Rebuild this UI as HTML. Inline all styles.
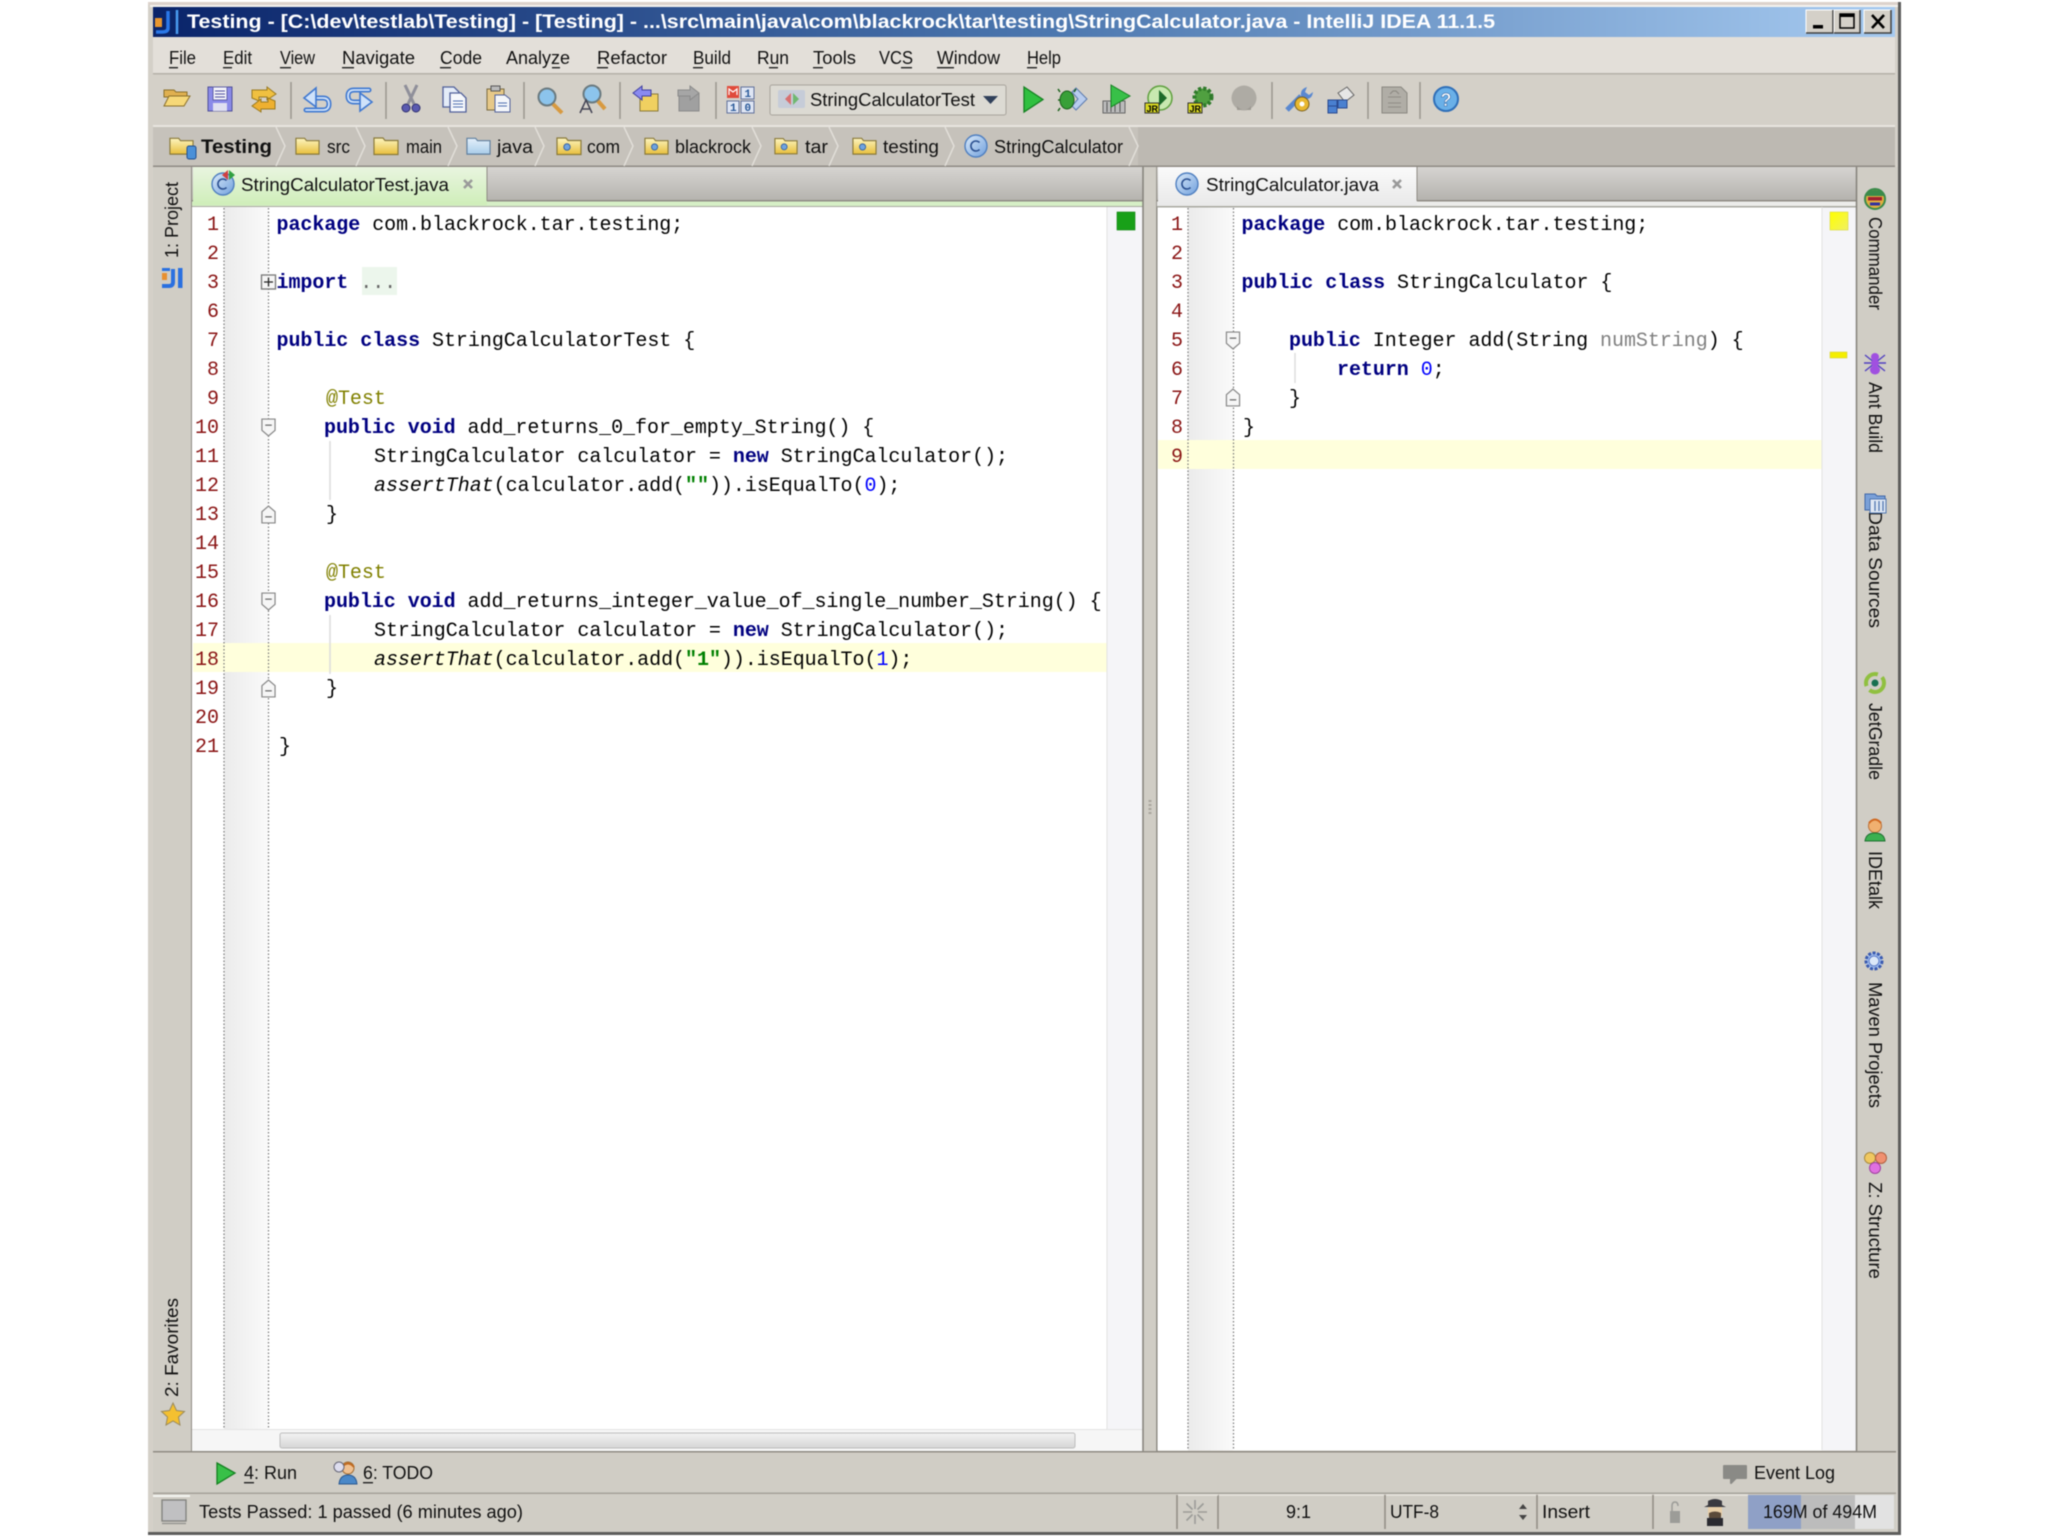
<!DOCTYPE html>
<html><head><meta charset="utf-8"><title>IntelliJ IDEA</title>
<style>
html,body{margin:0;padding:0;background:#fff;width:2048px;height:1536px;overflow:hidden}
svg{display:block;filter:blur(.45px)}
text{white-space:pre}
.u{font-family:"Liberation Sans",sans-serif;font-size:18px;fill:#111}
.m{font-family:"Liberation Mono",monospace;font-size:20px;fill:#000;letter-spacing:-.04px}
.k{font-weight:bold;fill:#000080}
.a{fill:#808000}.s{font-weight:bold;fill:#008000}.n{fill:#0000ff}.p{fill:#808080}.i{font-style:italic}
.ln{font-family:"Liberation Mono",monospace;font-size:20px;fill:#8a1414;text-anchor:end}
.dot{stroke:#777;stroke-width:1.2;stroke-dasharray:1.5 2;fill:none}
.sep{stroke:#9a978f;stroke-width:1.5}
.ch{fill:none;stroke:#e2dfd9;stroke-width:1.5}
.d{font-family:"Liberation Mono",monospace;font-size:11px;font-weight:bold;fill:#2a5a9a}
</style></head><body>
<svg width="2048" height="1536" viewBox="0 0 2048 1536" xmlns="http://www.w3.org/2000/svg">
<defs>
<linearGradient id="tg" x1="0" x2="1" y1="0" y2="0"><stop offset="0" stop-color="#0a246a"/><stop offset=".5" stop-color="#4a75ad"/><stop offset="1" stop-color="#a6caf0"/></linearGradient>
<linearGradient id="tabbar" x1="0" x2="0" y1="0" y2="1"><stop offset="0" stop-color="#d6d4d1"/><stop offset="1" stop-color="#b5b3ae"/></linearGradient>
<linearGradient id="gt" x1="0" x2="0" y1="0" y2="1"><stop offset="0" stop-color="#e9f5e0"/><stop offset="1" stop-color="#cfeeb9"/></linearGradient>
<linearGradient id="wt" x1="0" x2="0" y1="0" y2="1"><stop offset="0" stop-color="#fafafa"/><stop offset="1" stop-color="#e9e9e9"/></linearGradient>
<linearGradient id="sc" x1="0" x2="0" y1="0" y2="1"><stop offset="0" stop-color="#f2f2f2"/><stop offset="1" stop-color="#d6d6d6"/></linearGradient>
<linearGradient id="fy" x1="0" x2="0" y1="0" y2="1"><stop offset="0" stop-color="#fdf5c0"/><stop offset="1" stop-color="#e8bf3c"/></linearGradient>
<linearGradient id="fb" x1="0" x2="0" y1="0" y2="1"><stop offset="0" stop-color="#e4f0fa"/><stop offset="1" stop-color="#a9cdea"/></linearGradient>
<linearGradient id="cc" x1="0" x2="1" y1="0" y2="1"><stop offset="0" stop-color="#dcebfa"/><stop offset="1" stop-color="#6f9fdc"/></linearGradient>
<linearGradient id="yy" x1="0" x2="1" y1="0" y2="1"><stop offset="0" stop-color="#ffff00"/><stop offset="1" stop-color="#f0f060"/></linearGradient>
<linearGradient id="gut" x1="0" x2="1" y1="0" y2="0"><stop offset="0" stop-color="#ebebeb"/><stop offset="1" stop-color="#fafafa"/></linearGradient>
<symbol id="fold" viewBox="0 0 26 20" overflow="visible"><path d="M1 3h9l2 2.5h13v14H1z" fill="url(#fy)" stroke="#8a7a3a" stroke-width="1.2"/></symbol>
<symbol id="fblue" viewBox="0 0 26 20" overflow="visible"><path d="M1 3h9l2 2.5h13v14H1z" fill="url(#fb)" stroke="#5f7f9f" stroke-width="1.2"/></symbol>
<symbol id="pk" viewBox="0 0 26 20" overflow="visible"><path d="M1 3h9l2 2.5h13v14H1z" fill="url(#fy)" stroke="#8a7a3a" stroke-width="1.2"/><circle cx="11" cy="12" r="3.2" fill="#6fa4e0" stroke="#3a64a0"/></symbol>
<symbol id="cico" viewBox="0 0 24 24" overflow="visible"><circle cx="12" cy="12" r="11" fill="url(#cc)" stroke="#4f7fc0" stroke-width="1.4"/><path d="M15.5 8.5a5 5 0 1 0 0 7" fill="none" stroke="#2a4f8f" stroke-width="1.6"/></symbol>
<symbol id="fdn" viewBox="0 0 16 20" overflow="visible"><path d="M1 1h14v12l-7 6-7-6z" fill="#f6f6f6" stroke="#888" stroke-width="1.3"/><path d="M4.5 7.5h7" stroke="#666" stroke-width="1.3"/></symbol>
<symbol id="fup" viewBox="0 0 16 20" overflow="visible"><path d="M1 19h14V7L8 1 1 7z" fill="#f6f6f6" stroke="#888" stroke-width="1.3"/><path d="M4.5 12.5h7" stroke="#666" stroke-width="1.3"/></symbol>
</defs>

<!-- window -->
<rect width="2048" height="1536" fill="#fff"/>
<rect x="148" y="2" width="1753" height="1533" fill="#d4d0c8"/>
<rect x="148" y="2" width="1753" height="3" fill="#dcd2cc"/>
<rect x="150" y="5" width="1749" height="2" fill="#f4f2ee"/>
<rect x="1898" y="2" width="3" height="1533" fill="#5d5d5b"/>
<rect x="148" y="1532" width="1753" height="3" fill="#5d5d5b"/>
<!-- title -->
<rect x="153" y="7" width="1742" height="30" fill="url(#tg)"/>
<rect x="155" y="18" width="7" height="9" fill="#e8962e"/>
<path d="M168 11v17q0 4-6 4h-6" fill="none" stroke="#2a78e8" stroke-width="3.500"/><path d="M177 10v24" stroke="#4a9cf0" stroke-width="2.500"/>
<text x="187" y="28" textLength="1308" lengthAdjust="spacingAndGlyphs" font-family="Liberation Sans" font-weight="bold" font-size="19" fill="#fff">Testing - [C:\dev\testlab\Testing] - [Testing] - ...\src\main\java\com\blackrock\tar\testing\StringCalculator.java - IntelliJ IDEA 11.1.5</text>
<g>
<rect x="1806" y="10" width="27" height="23" fill="#d4d0c8" stroke="#fff"/><path d="M1833 10v23h-27" fill="none" stroke="#404040" stroke-width="1.5"/><rect x="1813" y="25" width="10" height="3.5" fill="#000"/>
<rect x="1834" y="10" width="26" height="23" fill="#d4d0c8" stroke="#fff"/><path d="M1860 10v23h-26" fill="none" stroke="#404040" stroke-width="1.5"/><rect x="1840" y="14" width="14" height="14" fill="none" stroke="#000" stroke-width="1.5"/><rect x="1840" y="14" width="14" height="3" fill="#000"/>
<rect x="1864" y="10" width="27" height="23" fill="#d4d0c8" stroke="#fff"/><path d="M1891 10v23h-27" fill="none" stroke="#404040" stroke-width="1.5"/><path d="M1872 15l12 13M1884 15l-12 13" stroke="#000" stroke-width="2.6"/>
</g>
<!-- menu -->
<rect x="153" y="37" width="1742" height="36" fill="#e3dfd9"/>
<rect x="153" y="73" width="1742" height="1.5" fill="#b4b0a9"/>
<g class="u">
<text class="u" x="169" y="64" textLength="27" lengthAdjust="spacingAndGlyphs">File</text>
<text class="u" x="223" y="64" textLength="29" lengthAdjust="spacingAndGlyphs">Edit</text>
<text class="u" x="280" y="64" textLength="35" lengthAdjust="spacingAndGlyphs">View</text>
<text class="u" x="342" y="64" textLength="73" lengthAdjust="spacingAndGlyphs">Navigate</text>
<text class="u" x="440" y="64" textLength="42" lengthAdjust="spacingAndGlyphs">Code</text>
<text class="u" x="506" y="64" textLength="64" lengthAdjust="spacingAndGlyphs">Analyze</text>
<text class="u" x="597" y="64" textLength="70" lengthAdjust="spacingAndGlyphs">Refactor</text>
<text class="u" x="693" y="64" textLength="38" lengthAdjust="spacingAndGlyphs">Build</text>
<text class="u" x="757" y="64" textLength="32" lengthAdjust="spacingAndGlyphs">Run</text>
<text class="u" x="813" y="64" textLength="43" lengthAdjust="spacingAndGlyphs">Tools</text>
<text class="u" x="879" y="64" textLength="34" lengthAdjust="spacingAndGlyphs">VCS</text>
<text class="u" x="937" y="64" textLength="63" lengthAdjust="spacingAndGlyphs">Window</text>
<text class="u" x="1027" y="64" textLength="34" lengthAdjust="spacingAndGlyphs">Help</text>
</g>
<g fill="#222">
<rect x="169" y="67" width="9" height="1.4"/><rect x="223" y="67" width="9" height="1.4"/><rect x="280" y="67" width="11" height="1.4"/><rect x="342" y="67" width="12" height="1.4"/><rect x="440" y="67" width="11" height="1.4"/><rect x="552" y="67" width="8" height="1.4"/><rect x="597" y="67" width="11" height="1.4"/><rect x="693" y="67" width="10" height="1.4"/><rect x="769" y="67" width="9" height="1.4"/><rect x="813" y="67" width="10" height="1.4"/><rect x="901" y="67" width="11" height="1.4"/><rect x="937" y="67" width="17" height="1.4"/><rect x="1027" y="67" width="10" height="1.4"/>
</g>
<!-- toolbar -->
<rect x="153" y="74.5" width="1742" height="51" fill="#d4d0c8"/>
<rect x="153" y="125" width="1742" height="2" fill="#e8e5df"/>
<g class="sep"><path d="M291 82v37M386 82v37M524 82v37M620 82v37M716 82v37M1272 82v37M1368 82v37M1420 82v37"/></g>
<!-- open -->
<path d="M164 90h10l2 2h11v5h-23z" fill="#e0b050" stroke="#8a6f2a"/><path d="M164 106l5-10h21l-6 10z" fill="#f6d878" stroke="#8a6f2a"/>
<!-- save -->
<rect x="208" y="87" width="24" height="24" fill="#8a8ae8" stroke="#50509a"/><rect x="213" y="87" width="14" height="13" fill="#f4f4fa" stroke="#6060a8"/><rect x="213" y="103" width="14" height="8" fill="#e0e0f0"/><path d="M215 91h10M215 94h10M215 97h10" stroke="#5050a0"/>
<!-- sync -->
<path d="M252 98v-8h15v-3l9 7-9 6v-3h-8v4z" fill="#f0c040" stroke="#9a7a20"/><path d="M275 101v8h-14v3l-9-6 9-7v3h7v-4z" fill="#eeb030" stroke="#9a7a20"/>
<!-- undo -->
<g fill="none" stroke-linecap="round">
<path d="M316 98h7q6 0 6 6t-6 6h-17" stroke="#3f78d0" stroke-width="5"/><path d="M316 98h7q6 0 6 6t-6 6h-17" stroke="#cfe2fa" stroke-width="1.800"/>
</g>
<path d="M304 98l12-10v19z" fill="#cfe2fa" stroke="#3f78d0" stroke-width="1.600"/>
<!-- redo -->
<g fill="none" stroke-linecap="round">
<path d="M369 90h-15q-6 0-6 6t6 6h7" stroke="#3f78d0" stroke-width="5"/><path d="M369 90h-15q-6 0-6 6t6 6h7" stroke="#cfe2fa" stroke-width="1.800"/>
</g>
<path d="M372 102l-12-9v18z" fill="#cfe2fa" stroke="#3f78d0" stroke-width="1.600"/>
<!-- cut -->
<path d="M405 85l9 19M417 85l-9 19" stroke="#8f8f9a" stroke-width="3"/><circle cx="406" cy="108" r="4" fill="#5a5ab0" stroke="#303070"/><circle cx="416" cy="108" r="4" fill="#5a5ab0" stroke="#303070"/>
<!-- copy -->
<path d="M443 87h11l5 5v15h-16z" fill="#e4ecf8" stroke="#50609a" stroke-width="1.300"/><path d="M450 93h11l5 5v14h-16z" fill="#f6f8fc" stroke="#50609a" stroke-width="1.300"/><path d="M453 101h10M453 104h10M453 107h10" stroke="#5070b0"/>
<!-- paste -->
<rect x="487" y="89" width="17" height="21" fill="#e6c888" stroke="#7a6a40"/><rect x="491" y="86" width="9" height="5" fill="#bbb" stroke="#555"/><path d="M495 95h10l5 4v13h-15z" fill="#f4f6fa" stroke="#50609a"/><path d="M498 103h9M498 106h9" stroke="#5070b0"/>
<!-- find -->
<circle cx="547" cy="97" r="8.500" fill="#8cc4ec" stroke="#6a7a80" stroke-width="2"/><path d="M553 104l9 9" stroke="#d89a40" stroke-width="4"/>
<!-- replace -->
<circle cx="592" cy="94" r="8.500" fill="#8cc4ec" stroke="#6a7a80" stroke-width="2"/><path d="M598 101l7 8" stroke="#d89a40" stroke-width="4"/><path d="M580 113l6-13 6 13M582 109h8" fill="none" stroke="#445" stroke-width="1.500"/>
<!-- back / fwd -->
<path d="M640 94h18v17h-18z" fill="#f0d060" stroke="#8a7a3a"/><path d="M633 93l9-7v4h9v6h-9v4z" fill="#8a8af0" stroke="#4040a0"/>
<path d="M679 94h20v17h-20z" fill="#a0a0a0" stroke="#8a8a8a"/><path d="M699 93l-9-7v4h-12v6h12v4z" fill="#a6a6a6" stroke="#8a8a8a"/>
<!-- hierarchy -->
<rect x="727" y="86" width="12" height="12" fill="#e04a3a"/><path d="M729 95v-6l4 3 4-3v6" fill="none" stroke="#fff" stroke-width="1.200"/>
<rect x="741" y="87" width="13" height="12" fill="#dfe6f4" stroke="#60709a"/><rect x="727" y="101" width="12" height="12" fill="#dfe6f4" stroke="#60709a"/><rect x="741" y="101" width="13" height="12" fill="#dfe6f4" stroke="#60709a"/>
<text class="d" x="744.500" y="97">1</text><text class="d" x="730" y="111">1</text><text class="d" x="744.500" y="111">0</text>
<!-- combo -->
<rect x="770" y="85" width="236" height="30" rx="2" fill="#dcdad3" stroke="#a8a49c"/>
<rect x="778" y="90" width="27" height="18" rx="2" fill="#c6ccd8"/><path d="M791 93l-6 6 6 6z" fill="#d87070"/><path d="M793 93l6 6-6 6z" fill="#70b870"/>
<text class="u" x="810" y="106" textLength="165" lengthAdjust="spacingAndGlyphs">StringCalculatorTest</text>
<path d="M983 96h15l-7.500 8z" fill="#30405a"/>
<!-- run -->
<path d="M1024 87l19 12.500-19 12.500z" fill="#30c040" stroke="#148020" stroke-width="1.300"/>
<!-- debug -->
<path d="M1076 88l11 11-11 11-4-4 6-7-6-7z" fill="#b8ccee" stroke="#5a7ab0"/><ellipse cx="1067" cy="100" rx="7" ry="9" fill="#38a038" stroke="#1a601a"/><path d="M1060 92l-2-3M1060 108l-2 3M1074 92l2-3M1060 100h-2" stroke="#1a601a" stroke-width="1.500"/>
<!-- coverage -->
<path d="M1103 101h22v12h-22z" fill="#bbb" stroke="#666"/><path d="M1107 102v10M1111 102v10M1115 102v10M1120 102v10" stroke="#555"/><path d="M1111 85l19 11-19 11z" fill="#38c048" stroke="#148020"/>
<!-- jr -->
<circle cx="1160" cy="98" r="12" fill="#c8e8b0" stroke="#60a040" stroke-width="1.500"/><path d="M1159 90l8 8-8 8z" fill="#1c6a28"/><rect x="1145" y="103" width="14" height="10" fill="#d8d820" stroke="#333"/>
<text x="1146.500" y="112" font-family="Liberation Sans" font-weight="bold" font-size="9" fill="#000">JR</text>
<!-- jr bug -->
<circle cx="1203" cy="97" r="8.500" fill="#50a040" stroke="#2e7a2a" stroke-width="4" stroke-dasharray="3 2"/><rect x="1188" y="103" width="14" height="10" fill="#d8d820" stroke="#333"/>
<text x="1189.500" y="112" font-family="Liberation Sans" font-weight="bold" font-size="9" fill="#000">JR</text>
<!-- stop -->
<circle cx="1244" cy="98" r="12.500" fill="#aeaba4"/><path d="M1237 106q7 8 14 0v4h-14z" fill="#9c9992"/>
<!-- settings -->
<path d="M1287 110l14-14" stroke="#5a88d0" stroke-width="5"/><path d="M1301 96q-1-7 6-9l-2 5 4 3 4-3q-1 8-9 7" fill="#5a88d0"/><circle cx="1302" cy="104" r="7" fill="#e8b830" stroke="#7a6020"/><circle cx="1302" cy="104" r="2.500" fill="#fff"/>
<!-- structure -->
<path d="M1338 93l9-6 7 8-9 7z" fill="#e6e6e6" stroke="#666"/><rect x="1328" y="100" width="9" height="8" fill="#4a80d0" stroke="#2a4a90"/><rect x="1338" y="100" width="9" height="8" fill="#4a80d0" stroke="#2a4a90"/><rect x="1328" y="106" width="9" height="7" fill="#4a80d0" stroke="#2a4a90"/>
<!-- doc -->
<path d="M1382 87h19l6 6v20h-25z" fill="#b0ada6" stroke="#8a8780"/><path d="M1388 97h13M1388 103h13M1388 107h13" stroke="#8f8c86"/><path d="M1390 94l3-3h3l3 3" fill="none" stroke="#8a8780"/>
<!-- help -->
<circle cx="1446" cy="99" r="12" fill="#6ab0e8" stroke="#2f6fb8" stroke-width="2"/><text x="1446" y="106" text-anchor="middle" font-family="Liberation Sans" font-weight="bold" font-size="18" fill="#fff" stroke="#2a5a9a" stroke-width=".5">?</text>

<!-- breadcrumb -->
<rect x="153" y="127" width="1742" height="39" fill="#bdb9b2"/>
<rect x="153" y="127" width="985" height="39" fill="#c6c2bb"/>
<rect x="153" y="165.500" width="1742" height="1.500" fill="#8f8b84"/>
<use href="#fold" x="169" y="135" width="25" height="20"/>
<rect x="187" y="146" width="9" height="13" rx="2" fill="#4a90d8" stroke="#204f90"/>
<text class="u" x="201" y="153" textLength="71" lengthAdjust="spacingAndGlyphs" font-weight="bold" style="font-size:19px">Testing</text>
<use href="#fold" x="295" y="135" width="25" height="20"/><text class="u" x="327" y="153" textLength="23" lengthAdjust="spacingAndGlyphs">src</text>
<use href="#fold" x="373" y="135" width="26" height="20"/><text class="u" x="406" y="153" textLength="36" lengthAdjust="spacingAndGlyphs">main</text>
<use href="#fblue" x="466" y="135" width="25" height="20"/><text class="u" x="497" y="153" textLength="36" lengthAdjust="spacingAndGlyphs">java</text>
<use href="#pk" x="556" y="135" width="26" height="20"/><text class="u" x="587" y="153" textLength="33" lengthAdjust="spacingAndGlyphs">com</text>
<use href="#pk" x="644" y="135" width="25" height="20"/><text class="u" x="675" y="153" textLength="76" lengthAdjust="spacingAndGlyphs">blackrock</text>
<use href="#pk" x="774" y="135" width="24" height="20"/><text class="u" x="805" y="153" textLength="23" lengthAdjust="spacingAndGlyphs">tar</text>
<use href="#pk" x="852" y="135" width="25" height="20"/><text class="u" x="883" y="153" textLength="56" lengthAdjust="spacingAndGlyphs">testing</text>
<use href="#cico" x="964" y="134" width="24" height="24"/><text class="u" x="994" y="153" textLength="129" lengthAdjust="spacingAndGlyphs">StringCalculator</text>
<g class="ch"><path d="M276 127l9 19-9 20M356 127l9 19-9 20M448 127l9 19-9 20M535 127l9 19-9 20M624 127l9 19-9 20M752 127l9 19-9 20M829 127l9 19-9 20M945 127l9 19-9 20M1129 127l9 19-9 20"/></g>

<!-- left strip -->
<rect x="153" y="167" width="39" height="1284" fill="#d0cdc5"/>
<rect x="191" y="167" width="1.500" height="1284" fill="#8f8b84"/>
<text class="u" transform="translate(178 258) rotate(-90)" textLength="76" lengthAdjust="spacingAndGlyphs">1: Project</text>
<rect x="162" y="273" width="5" height="7" fill="#e89030"/><path d="M173 269v13q0 4-4 4h-7" fill="none" stroke="#2a70e0" stroke-width="4"/><rect x="162" y="268" width="8" height="3" fill="#2a70e0"/><rect x="178" y="268" width="4.500" height="20" fill="#2a70e0"/>
<text class="u" transform="translate(178 1397) rotate(-90)" textLength="99" lengthAdjust="spacingAndGlyphs">2: Favorites</text>
<path d="M173 1403l3.500 7.500 8 1-6 5.500 1.500 8-7-4-7 4 1.500-8-6-5.500 8-1z" fill="#f4c030" stroke="#9a8a5a"/>

<!-- left tabs -->
<rect x="192" y="167" width="951" height="34" fill="url(#tabbar)"/>
<rect x="192" y="200" width="951" height="1.500" fill="#8f8b84"/>
<rect x="192" y="201.500" width="951" height="5" fill="#d6efc6"/>
<rect x="192" y="206" width="951" height="1.500" fill="#a8a8a0"/>
<rect x="193" y="167" width="294" height="38" fill="url(#gt)"/>
<path d="M487 167v34" stroke="#8f8b84"/>
<use href="#cico" x="211" y="172" width="24" height="24"/><path d="M228 170l-6 5 6 5z" fill="#d04040"/><path d="M229 170l6 5-6 5z" fill="#30a040"/>
<text class="u" x="241" y="191" textLength="208" lengthAdjust="spacingAndGlyphs">StringCalculatorTest.java</text>
<path d="M464 180l8 8M472 180l-8 8" stroke="#9a9a9a" stroke-width="2.600"/>

<!-- left editor -->
<rect x="192" y="207" width="951" height="1244" fill="#fff"/>
<rect x="224" y="207" width="44" height="1222" fill="url(#gut)"/>
<rect x="193" y="643" width="914" height="29" fill="#ffffdc"/>
<path class="dot" d="M224 208V1428M268.500 208V1428"/>
<rect x="1107" y="207" width="36" height="1244" fill="#f5f5f8"/>
<path d="M1107 207v1222" stroke="#e2e2e2"/>
<rect x="1117" y="212" width="18" height="18" fill="#18a018" stroke="#0e800e" stroke-width=".6"/>
<rect x="362" y="267" width="35" height="28" fill="#ecf6ec"/>
<path d="M330 441v59M330 615v59" stroke="#dcdcdc" stroke-width="1.500"/>
<text class="ln" x="219" y="230">1</text><text class="ln" x="219" y="259">2</text><text class="ln" x="219" y="288">3</text><text class="ln" x="219" y="317">6</text><text class="ln" x="219" y="346">7</text><text class="ln" x="219" y="375">8</text><text class="ln" x="219" y="404">9</text><text class="ln" x="219" y="433">10</text><text class="ln" x="219" y="462">11</text><text class="ln" x="219" y="491">12</text><text class="ln" x="219" y="520">13</text><text class="ln" x="219" y="549">14</text><text class="ln" x="219" y="578">15</text><text class="ln" x="219" y="607">16</text><text class="ln" x="219" y="636">17</text><text class="ln" x="219" y="665">18</text><text class="ln" x="219" y="694">19</text><text class="ln" x="219" y="723">20</text><text class="ln" x="219" y="752">21</text>
<rect x="261.500" y="275" width="14" height="14" fill="#f6f6f6" stroke="#777" stroke-width="1.300"/><path d="M264 282h9M268.500 277.500v9" stroke="#222" stroke-width="1.300"/>
<use href="#fdn" x="261" y="418" width="15" height="19"/><use href="#fup" x="261" y="505" width="15" height="19"/>
<use href="#fdn" x="261" y="592" width="15" height="19"/><use href="#fup" x="261" y="679" width="15" height="19"/>
<g>
<text class="m" x="276.500" y="230"><tspan class="k">package</tspan> com.blackrock.tar.testing;</text>
<text class="m" x="276.500" y="288"><tspan class="k">import</tspan> <tspan fill="#666">...</tspan></text>
<text class="m" x="276.500" y="346"><tspan class="k">public class</tspan> StringCalculatorTest {</text>
<text class="m a" x="326" y="404">@Test</text>
<text class="m" x="324" y="433"><tspan class="k">public void</tspan> add_returns_0_for_empty_String() {</text>
<text class="m" x="374" y="462">StringCalculator calculator = <tspan class="k">new</tspan> StringCalculator();</text>
<text class="m" x="374" y="491"><tspan class="i">assertThat</tspan>(calculator.add(<tspan class="s">""</tspan>)).isEqualTo(<tspan class="n">0</tspan>);</text>
<text class="m" x="326" y="520">}</text>
<text class="m a" x="326" y="578">@Test</text>
<text class="m" x="324" y="607"><tspan class="k">public void</tspan> add_returns_integer_value_of_single_number_String() {</text>
<text class="m" x="374" y="636">StringCalculator calculator = <tspan class="k">new</tspan> StringCalculator();</text>
<text class="m" x="374" y="665"><tspan class="i">assertThat</tspan>(calculator.add(<tspan class="s">"1"</tspan>)).isEqualTo(<tspan class="n">1</tspan>);</text>
<text class="m" x="326" y="694">}</text>
<text class="m" x="279" y="752">}</text>
</g>
<!-- hscroll -->
<rect x="192" y="1429" width="951" height="22" fill="#f6f6f6"/>
<path d="M192 1429.500H1143" stroke="#e4e4e4"/>
<rect x="280" y="1433" width="795" height="15" rx="2" fill="url(#sc)" stroke="#bdbdbd"/>

<!-- splitter -->
<rect x="1143" y="167" width="14" height="1284" fill="#d0cdc5"/>
<path d="M1143 167V1451M1157 167V1451" stroke="#84817a" stroke-width="1.500"/>
<path d="M1150 800v16" stroke="#aaa69e" stroke-width="3" stroke-dasharray="2 2"/>

<!-- right tabs -->
<rect x="1157" y="167" width="699" height="33" fill="url(#tabbar)"/>
<rect x="1157" y="200" width="699" height="1.500" fill="#8f8b84"/>
<rect x="1157" y="201.500" width="699" height="5" fill="#ececea"/>
<rect x="1157" y="206" width="699" height="1.500" fill="#a8a8a0"/>
<rect x="1158" y="167" width="259" height="39" fill="url(#wt)"/>
<path d="M1417 167v34" stroke="#8f8b84"/>
<use href="#cico" x="1175" y="172" width="24" height="24"/>
<text class="u" x="1206" y="191" textLength="173" lengthAdjust="spacingAndGlyphs">StringCalculator.java</text>
<path d="M1393 180l8 8M1401 180l-8 8" stroke="#9a9a9a" stroke-width="2.600"/>

<!-- right editor -->
<rect x="1157.500" y="207.500" width="699" height="1243" fill="#fff"/>
<rect x="1188" y="207.500" width="45" height="1243" fill="url(#gut)"/>
<rect x="1158" y="440" width="664" height="29" fill="#ffffdc"/>
<path class="dot" d="M1188 208V1450M1233.500 208V1450"/>
<rect x="1822" y="207.500" width="34" height="1243" fill="#f5f5f8"/>
<path d="M1822 207v1243" stroke="#e2e2e2"/>
<rect x="1830" y="212" width="18" height="18" fill="url(#yy)" stroke="#d8d840" stroke-width=".6"/>
<rect x="1830" y="352" width="17" height="6" fill="#f4ee00" stroke="#d4d040" stroke-width=".6"/>
<path d="M1295 353v30" stroke="#dcdcdc" stroke-width="1.500"/>
<text class="ln" x="1183" y="230">1</text><text class="ln" x="1183" y="259">2</text><text class="ln" x="1183" y="288">3</text><text class="ln" x="1183" y="317">4</text><text class="ln" x="1183" y="346">5</text><text class="ln" x="1183" y="375">6</text><text class="ln" x="1183" y="404">7</text><text class="ln" x="1183" y="433">8</text><text class="ln" x="1183" y="462">9</text>
<use href="#fdn" x="1225.500" y="331" width="15" height="19"/><use href="#fup" x="1225.500" y="388" width="15" height="19"/>
<text class="m" x="1241.500" y="230"><tspan class="k">package</tspan> com.blackrock.tar.testing;</text>
<text class="m" x="1241.500" y="288"><tspan class="k">public class</tspan> StringCalculator {</text>
<text class="m" x="1289" y="346"><tspan class="k">public</tspan> Integer add(String <tspan class="p">numString</tspan>) {</text>
<text class="m" x="1337" y="375"><tspan class="k">return</tspan> <tspan class="n">0</tspan>;</text>
<text class="m" x="1289" y="404">}</text>
<text class="m" x="1243" y="433">}</text>

<!-- right strip -->
<rect x="1856" y="167" width="42" height="1284" fill="#d0cdc5"/>
<path d="M1856.500 167V1451" stroke="#84817a" stroke-width="1.500"/>
<text class="u" transform="translate(1869 217) rotate(90)" textLength="93" lengthAdjust="spacingAndGlyphs">Commander</text>
<text class="u" transform="translate(1869 382) rotate(90)" textLength="71" lengthAdjust="spacingAndGlyphs">Ant Build</text>
<text class="u" transform="translate(1869 511) rotate(90)" textLength="117" lengthAdjust="spacingAndGlyphs">Data Sources</text>
<text class="u" transform="translate(1869 703) rotate(90)" textLength="77" lengthAdjust="spacingAndGlyphs">JetGradle</text>
<text class="u" transform="translate(1869 851) rotate(90)" textLength="58" lengthAdjust="spacingAndGlyphs">IDEtalk</text>
<text class="u" transform="translate(1869 982) rotate(90)" textLength="126" lengthAdjust="spacingAndGlyphs">Maven Projects</text>
<text class="u" transform="translate(1869 1182) rotate(90)" textLength="97" lengthAdjust="spacingAndGlyphs">Z: Structure</text>
<!-- strip icons -->
<circle cx="1875" cy="199" r="10" fill="#e0b040" stroke="#3a8a4a" stroke-width="2"/><path d="M1866 193q9-6 18 0v3h-18z" fill="#3a8a4a"/><rect x="1868" y="197" width="14" height="3.500" fill="#a02030"/><path d="M1870 204h10" stroke="#3030a0" stroke-width="3"/>
<path d="M1875 355v17M1865 355l20 16M1885 355l-20 16M1864 363h22" stroke="#5040c0" stroke-width="1.400"/><ellipse cx="1875" cy="357" rx="4" ry="4" fill="#a050e0"/><ellipse cx="1875" cy="363" rx="4" ry="3.500" fill="#a050e0"/><ellipse cx="1875" cy="370" rx="5" ry="4.500" fill="#a050e0"/>
<path d="M1865 494h10l2 2h8v14h-20z" fill="#7aa0d8" stroke="#3f66a8"/><rect x="1870" y="499" width="16" height="14" fill="#e0e8f4" stroke="#4f76b0"/><path d="M1875 501v10M1879 501v10M1883 501v10" stroke="#4f76b0" stroke-width="1.300"/>
<circle cx="1875" cy="683" r="9" fill="none" stroke="#90c040" stroke-width="4" stroke-dasharray="20 5"/><circle cx="1875" cy="683" r="3.500" fill="#187050"/>
<circle cx="1875" cy="826" r="6.500" fill="#f0b070" stroke="#b8703a"/><path d="M1869 823q6-7 12 0" fill="none" stroke="#d06820" stroke-width="2"/><path d="M1865 841q1-8 10-8t10 8z" fill="#3cb050" stroke="#1e7030"/>
<circle cx="1874" cy="961" r="8" fill="#a8c4f0" stroke="#3a5ab0" stroke-width="3" stroke-dasharray="3 1.500"/><circle cx="1874" cy="961" r="5" fill="#dce8f8" stroke="#5a7ac8"/>
<circle cx="1870" cy="1158" r="5.500" fill="#f0c860" stroke="#a88a40"/><circle cx="1881" cy="1158" r="5.500" fill="#f09070" stroke="#b06040"/><circle cx="1875" cy="1168" r="5.500" fill="#e070e0" stroke="#a040a0"/>

<!-- bottom tool bar -->
<rect x="153" y="1451" width="1743" height="1.500" fill="#8f8b84"/>
<rect x="153" y="1452.500" width="1743" height="40" fill="#d0cdc5"/>
<rect x="153" y="1492.500" width="1743" height="1.500" fill="#a5a29a"/>
<path d="M217 1463l18 10-18 11z" fill="#38c048" stroke="#148020" stroke-width="1.300"/>
<text class="u" x="244" y="1479" textLength="53" lengthAdjust="spacingAndGlyphs">4: Run</text><rect x="244" y="1482" width="10" height="1.400" fill="#222"/>
<circle cx="348" cy="1468" r="6" fill="#f0c090" stroke="#a06a30"/><path d="M342 1467q6-7 12 0" fill="none" stroke="#c06a20" stroke-width="2"/><path d="M339 1484q1-9 9-9t9 9z" fill="#4a88c8" stroke="#2a5890"/><circle cx="339" cy="1467" r="5" fill="#dde" stroke="#667"/>
<text class="u" x="363" y="1479" textLength="70" lengthAdjust="spacingAndGlyphs">6: TODO</text><rect x="363" y="1482" width="10" height="1.400" fill="#222"/>
<path d="M1724 1466h22v12h-10l-5 5v-5h-7z" fill="#8a8a86" stroke="#8a8a86" stroke-linejoin="round" stroke-width="2"/>
<text class="u" x="1754" y="1479" textLength="81" lengthAdjust="spacingAndGlyphs">Event Log</text>

<!-- status -->
<rect x="153" y="1494" width="1743" height="38" fill="#d0cdc5"/>
<rect x="153" y="1495" width="37" height="2" fill="#f4f4f0"/>
<rect x="162" y="1500" width="24" height="21" fill="#c0c0c2" stroke="#80807c" stroke-width="1.300"/>
<path d="M162 1523.500h24" stroke="#90908c" stroke-width="1.200"/>
<text class="u" x="199" y="1518" textLength="324" lengthAdjust="spacingAndGlyphs">Tests Passed: 1 passed (6 minutes ago)</text>
<path d="M1177 1495v34M1218 1495v34M1385 1495v34M1537 1495v34M1653 1495v34" stroke="#8f8b84" stroke-width="1.500"/>
<path d="M1178 1495h40M1219 1495h165M1386 1495h150M1538 1495h114M1654 1495h94" stroke="#e8e5df" stroke-width="1.500"/>
<g stroke="#9c9c98" stroke-width="1.600"><path d="M1195 1500v9M1195 1515v9M1183 1512h9M1198 1512h9M1186.500 1503.500l6 6M1197.500 1514.500l6 6M1203.500 1503.500l-6 6M1192.500 1514.500l-6 6"/></g>
<text class="u" x="1286" y="1518" textLength="25" lengthAdjust="spacingAndGlyphs">9:1</text>
<text class="u" x="1390" y="1518" textLength="49" lengthAdjust="spacingAndGlyphs">UTF-8</text>
<path d="M1519 1509l4-5 4 5zM1519 1515l4 5 4-5z" fill="#444"/>
<text class="u" x="1542" y="1518" textLength="48" lengthAdjust="spacingAndGlyphs">Insert</text>
<rect x="1670" y="1511" width="10" height="12" fill="#9c9c98"/><path d="M1672 1511v-5q0-4 3-4t3 4" fill="none" stroke="#9c9c98" stroke-width="1.500"/>
<path d="M1704 1507h22l-4-2v-4q-7-4-14 0v4z" fill="#3a3a40"/><rect x="1708" y="1507" width="14" height="9" fill="#e8cfa8"/><path d="M1709 1513q6-3 12 0v5h-12z" fill="#5a4a3a"/><rect x="1707" y="1518" width="16" height="8" fill="#2a2a30"/>
<rect x="1748" y="1495" width="53" height="34" fill="#8fa0c6"/>
<rect x="1801" y="1495" width="54" height="34" fill="#bcbcbc"/>
<rect x="1855" y="1495" width="39" height="34" fill="#e2e2e2"/>
<text class="u" x="1763" y="1518" textLength="114" lengthAdjust="spacingAndGlyphs">169M of 494M</text>
</svg>
</body></html>
